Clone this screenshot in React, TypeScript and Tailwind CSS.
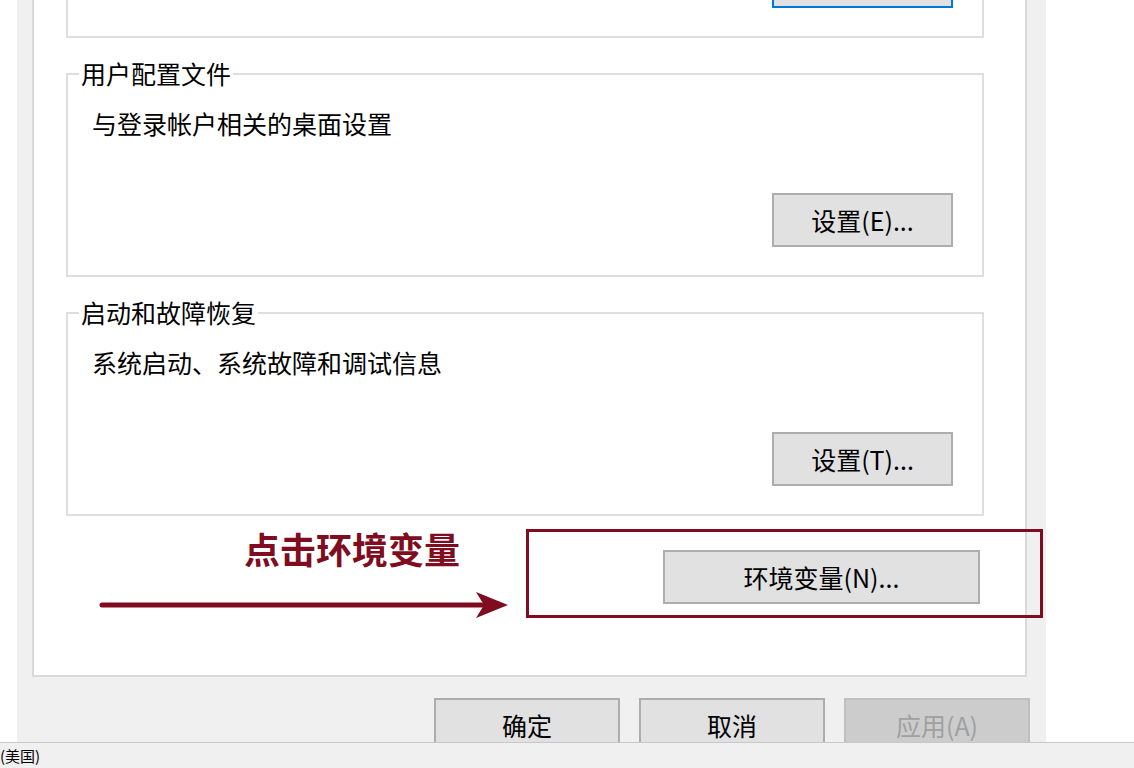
import React from "react";

const FONT = { fontFamily: '"Noto Sans CJK SC", "Noto Sans", sans-serif' };

function WinButton({
  children,
  variant = "normal",
  className = "",
}: {
  children?: React.ReactNode;
  variant?: "normal" | "focus" | "disabled";
  className?: string;
}) {
  const v =
    variant === "focus"
      ? "border-[#0078d7] bg-[#e1e1e1] text-black"
      : variant === "disabled"
      ? "border-[#bfbfbf] bg-[#cccccc] text-[#a0a0a0]"
      : "border-[#adadad] bg-[#e1e1e1] text-black";
  return (
    <div
      className={`h-[54px] border-2 ${v} flex items-center justify-center text-[25px] leading-none ${className}`}
    >
      {children}
    </div>
  );
}

function Group({
  title,
  desc,
  button,
  focus = false,
}: {
  title?: string;
  desc?: string;
  button?: string;
  focus?: boolean;
}) {
  return (
    <div className="relative w-[918px] h-[204px] border-2 border-[#dedede] flex flex-col">
      {title ? (
        <span className="absolute left-[11px] top-[-17px] bg-white px-[2px] text-[25px] leading-[30px] text-black whitespace-nowrap">
          {title}
        </span>
      ) : null}
      <div className="pt-[33px] pl-[24px] h-[63px] text-[25px] leading-[30px] text-black whitespace-nowrap">
        {desc}
      </div>
      <div className="mt-[55px] flex justify-end pr-[29px]">
        <WinButton variant={focus ? "focus" : "normal"} className="w-[181px]">
          {button}
        </WinButton>
      </div>
    </div>
  );
}

export default function App() {
  return (
    <div className="relative w-[1134px] h-[768px] bg-white overflow-hidden" style={FONT}>
      <div className="h-[742px] flex overflow-hidden">
        <div className="w-[17px] shrink-0 bg-white" />
        <div className="w-[1029px] shrink-0 bg-[#f0f0f0] flex flex-col pl-[15px] pr-[19px]">
          <div className="-mt-[200px] bg-white border-2 border-[#d9d9d9] pl-[32px] pt-[32px] pb-[71px] flex flex-col gap-[35px]">
            <Group focus />
            <Group title="用户配置文件" desc="与登录帐户相关的桌面设置" button="设置(E)..." />
            <Group title="启动和故障恢复" desc="系统启动、系统故障和调试信息" button="设置(T)..." />
            <div className="w-[918px] flex justify-end pr-[4px] -mt-[1px]">
              <WinButton className="w-[317px]">环境变量(N)...</WinButton>
            </div>
          </div>
          <div className="mt-[21px] flex justify-end gap-[19px] mr-[-3px]">
            <WinButton className="w-[186px]">确定</WinButton>
            <WinButton className="w-[186px]">取消</WinButton>
            <WinButton variant="disabled" className="w-[186px]">应用(A)</WinButton>
          </div>
        </div>
        <div className="flex-1 bg-white" />
      </div>

      <div className="h-[26px] bg-[#f0f0f0] border-t border-[#c8c8c8] flex items-center text-[15px] leading-none text-black">
        (美国)
      </div>

      {/* annotation overlay */}
      <div className="absolute left-[244px] top-[527px] text-[36px] leading-[42px] font-bold text-[#800c1f] whitespace-nowrap">
        点击环境变量
      </div>
      <div className="absolute left-[526px] top-[529px] w-[517px] h-[89px] border-[3px] border-[#800c1f]" />
      <svg className="absolute left-0 top-0" width="1134" height="768" viewBox="0 0 1134 768" fill="none">
        <line x1="102" y1="605" x2="482" y2="605" stroke="#800c1f" strokeWidth="5" strokeLinecap="round" />
        <polygon points="476,592 508,605 476,618 484,605" fill="#800c1f" />
      </svg>
    </div>
  );
}
